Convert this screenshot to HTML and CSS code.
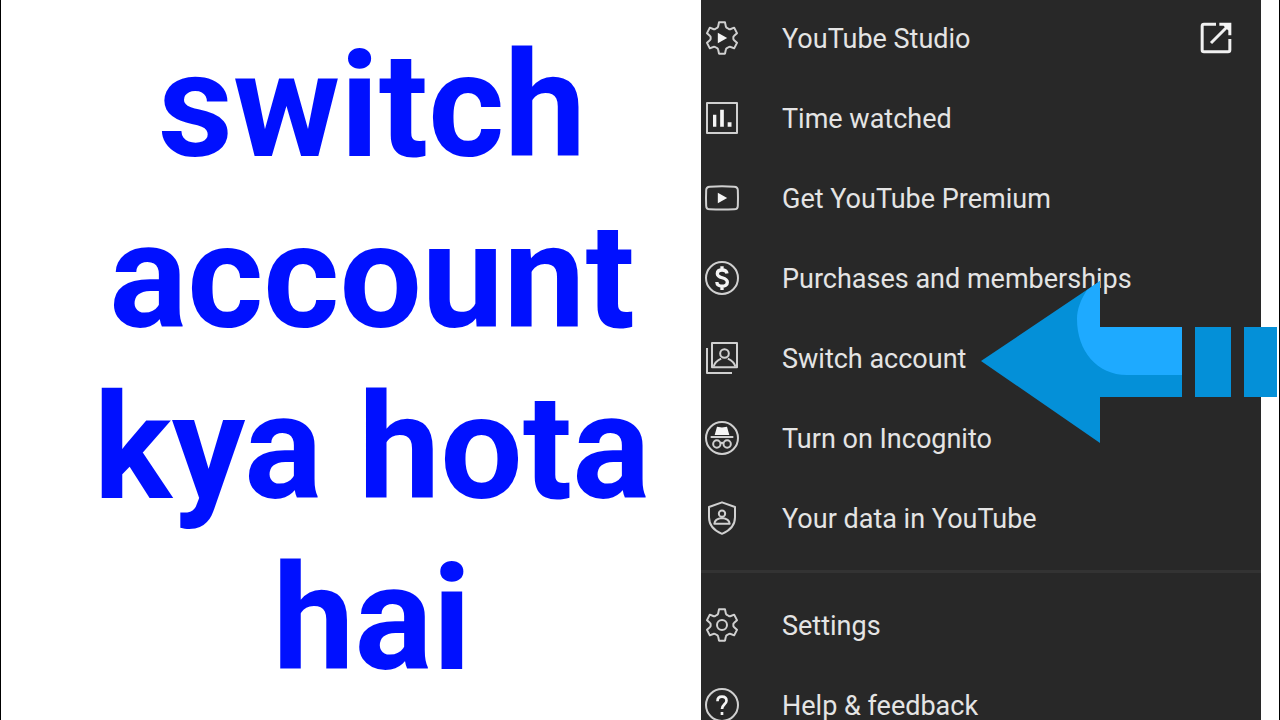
FILE: index.html
```html
<!DOCTYPE html>
<html lang="en">
<head>
<meta charset="utf-8">
<meta name="viewport" content="width=device-width, initial-scale=1">
<title>switch account kya hota hai</title>
<link rel="stylesheet" href="styles.css">
</head>
<body>
<svg class="defs" aria-hidden="true">
  <symbol id="gear" viewBox="0 0 24 24">
    <path d="M10.200 2.600h3.600l.5 2.400q.1.700.8 1l.9.500q.6.400 1.300.1l2-.8 1.700 3.300-1.700 1.500q-.6.500-.5 1.200v.4q-.1.700.5 1.200l1.700 1.500-1.700 3.300-2-.8q-.7-.3-1.300.1l-.9.500q-.7.300-.8 1l-.5 2.400h-3.600l-.5-2.400q-.1-.7-.8-1l-.9-.5q-.6-.4-1.300-.1l-2 .8L3 14.900l1.700-1.500q.6-.5.5-1.200v-.4q.1-.7-.5-1.200L3 9.100l1.700-3.300 2 .8q.7.300 1.300-.1l.9-.5q.7-.3.800-1z"/>
  </symbol>
</svg>
<main class="page">
  <h1 class="headline">switch<br>account<br>kya hota<br>hai</h1>
  <nav class="menu" aria-label="Account">
    <ul class="group">
      <li class="row"><a class="item" href="#studio">
        <svg class="icon" viewBox="0 0 24 24"><use href="#gear"/><path class="solid" d="M9.500 8.800l5.600 3.200-5.600 3.200z"/></svg>
        <span class="label">YouTube Studio</span>
        <svg class="icon external" viewBox="0 0 24 24"><path d="M12 3.700H4.800Q3.700 3.700 3.700 4.800v14.400q0 1.100 1.100 1.100h14.400q1.100 0 1.100-1.100v-6.600M9 15L19.500 4.500"/><path class="solid" d="M14 2.800h7.200V10.400h-1.800V7.500L16.500 4.600H14z"/></svg>
      </a></li>
      <li class="row"><a class="item" href="#time">
        <svg class="icon" viewBox="0 0 24 24"><path d="M3 3h18v18H3z"/><path class="solid" d="M6.600 10h2v7.200h-2zM10.900 7h2.200v10.200h-2.200zM15.400 14.500h2.300v2.700h-2.300z"/></svg>
        <span class="label">Time watched</span>
      </a></li>
      <li class="row"><a class="item" href="#premium">
        <svg class="icon" viewBox="0 0 24 24"><path d="M4.700 5.200Q12 4.800 19.300 5.200q2.200.1 2.200 2.200.2 4.600 0 9.200 0 2.100-2.200 2.200-7.300.3-14.600 0-2.200-.1-2.200-2.200-.2-4.600 0-9.200 0-2.100 2.200-2.200z"/><path class="solid" d="M9.500 8.800l5.600 3.200-5.600 3.200z"/></svg>
        <span class="label">Get YouTube Premium</span>
      </a></li>
      <li class="row"><a class="item" href="#purchases">
        <svg class="icon" viewBox="0 0 24 24"><circle cx="12" cy="12" r="9.600"/><path class="dollar" d="M15 9.300C14.800 7.900 13.700 7.200 12 7.200S9.200 8 9.200 9.400c0 3.200 6 1.700 6 5.100 0 1.500-1.300 2.400-3.100 2.400S9 16 8.900 14.400M12 5v2.300M12 16.800v2.400"/></svg>
        <span class="label">Purchases and memberships</span>
      </a></li>
      <li class="row current"><a class="item" href="#switch" aria-current="true">
        <svg class="icon" viewBox="0 0 24 24"><path d="M6 3h15v14.600H6zM3 6v15h15"/><circle cx="13.500" cy="9.300" r="2.600"/><path d="M7 17.200q.6-2.900 4.500-4.800M20 17.200q-.6-2.900-4.500-4.800"/></svg>
        <span class="label">Switch account</span>
      </a>
      <svg class="arrow" viewBox="0 0 296 162" aria-hidden="true">
        <path class="arrow-base" d="M0 80L119 0v46h82v70h-82v46zM214 46h36v70h-36zM263 46h33v70h-33z"/>
        <path class="arrow-shine" d="M119 0v46h82v48h-55C116 94 96 70 96 38c0-10 4-20 10-29z"/>
      </svg></li>
      <li class="row"><a class="item" href="#incognito">
        <svg class="icon" viewBox="0 0 24 24"><circle cx="12" cy="12" r="9.600"/><path class="solid" d="M9 5.300l3 .4 3-.4 1.400 4.900H7.600z"/><path d="M5.200 11.400h13.600M11 15.200q1-.7 2 0"/><circle cx="8.900" cy="15.600" r="2.200"/><circle cx="15.100" cy="15.600" r="2.200"/></svg>
        <span class="label">Turn on Incognito</span>
      </a></li>
      <li class="row"><a class="item" href="#data">
        <svg class="icon" viewBox="0 0 24 24"><path d="M12 2.600l7.800 2.800v6.200q0 6.800-7.800 9.900-7.800-3.100-7.800-9.900V5.400z"/><circle cx="12" cy="9.400" r="1.900"/><path d="M7.400 15.500q.3-3.200 4.600-3.500 4.300.3 4.600 3.500z"/></svg>
        <span class="label">Your data in YouTube</span>
      </a></li>
    </ul>
    <ul class="group">
      <li class="row"><a class="item" href="#settings">
        <svg class="icon" viewBox="0 0 24 24"><use href="#gear"/><circle cx="12" cy="12" r="3"/></svg>
        <span class="label">Settings</span>
      </a></li>
      <li class="row"><a class="item" href="#help">
        <svg class="icon" viewBox="0 0 24 24"><circle cx="12" cy="12" r="9.600"/><path class="question" d="M9.300 9.700c0-1.700 1.100-2.700 2.700-2.700s2.700 1 2.700 2.500c0 2-2.700 2.300-2.700 4.900M12 16.200v1.800"/></svg>
        <span class="label">Help &amp; feedback</span>
      </a></li>
    </ul>
  </nav>
</main>
</body>
</html>
```
FILE: styles.css
```css
* {
  box-sizing: border-box;
}

body {
  margin: 0;
  background: #fff;
  font-family: Roboto, "Liberation Sans", sans-serif;
}

.defs {
  position: absolute;
  width: 0;
  height: 0;
}

.page {
  display: grid;
  grid-template-columns: 700fr 560fr 18fr;
  height: 100vh;
  overflow: hidden;
  border: solid #000;
  border-width: 0 1px;
}

.headline {
  margin: 0;
  padding: 21px 0 0 42px;
  color: #0010ff;
  font-size: 146px;
  font-weight: 700;
  line-height: 171px;
  text-align: center;
  white-space: nowrap;
}

.menu {
  background: #282828;
}

.group {
  display: flex;
  flex-direction: column;
  gap: 40px;
  margin: 0;
  padding: 18px 0 32px;
  list-style: none;
}

.group + .group {
  padding-top: 32px;
  border-top: 3px solid #333;
}

.row {
  position: relative;
}

.item {
  display: flex;
  align-items: center;
  gap: 40px;
  padding: 0 25px 0 1px;
  color: #e4e4e4;
  font-size: 27px;
  line-height: 38px;
  text-decoration: none;
  white-space: nowrap;
}

.label {
  flex: 1;
  padding-top: 2px;
}

.icon {
  flex: none;
  width: 40px;
  height: 40px;
  fill: none;
  stroke: #d0d0d0;
  stroke-width: 1.2;
  stroke-linejoin: round;
}

.solid {
  fill: #f4f4f4;
  stroke: none;
}

.dollar,
.question {
  stroke: #f4f4f4;
  stroke-width: 2;
}

.question {
  stroke-width: 1.6;
}

.external {
  stroke: #f0f0f0;
  stroke-width: 1.8;
}

.current {
  z-index: 1;
}

.arrow {
  position: absolute;
  top: -57px;
  right: -16px;
  width: 296px;
  height: 162px;
  pointer-events: none;
}

.arrow-base {
  fill: #0490d8;
}

.arrow-shine {
  fill: #1eaaff;
}
```
